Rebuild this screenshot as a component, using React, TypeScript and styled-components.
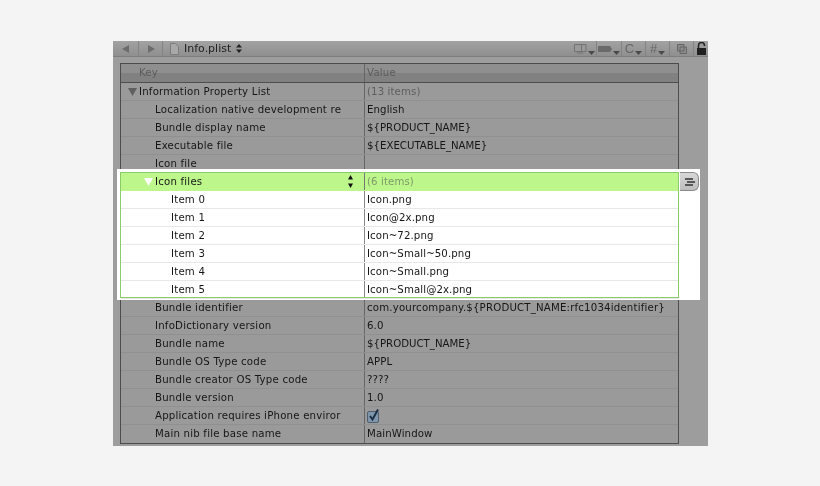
import React from "react";
import styled, { createGlobalStyle } from "styled-components";

const Global = createGlobalStyle`
  html, body { margin: 0; padding: 0; background: #f4f4f4; }
  #root { width: 820px; height: 486px; overflow: hidden; }
`;

const Page = styled.div`
  width: 820px;
  height: 486px;
  padding: 41px 112px 40px 113px;
  box-sizing: border-box;
  font-family: "DejaVu Sans", "Liberation Sans", sans-serif;
  font-size: 10.2px;
  color: #161616;
  filter: blur(0.3px);
`;

const Window = styled.div`
  height: 405px;
  background: #9d9d9d;
  display: flex;
  flex-direction: column;
`;

const Toolbar = styled.div`
  height: 15px;
  flex: none;
  display: flex;
  align-items: stretch;
  background: linear-gradient(#a2a2a2, #8f8f8f);
  border-bottom: 1px solid #7e7e7e;
`;

const ToolButton = styled.div<{ $w: number; $last?: boolean }>`
  width: ${(p) => p.$w}px;
  flex: none;
  display: flex;
  align-items: center;
  justify-content: center;
  border-right: ${(p) => (p.$last ? "none" : "1px solid #838383")};
  box-sizing: border-box;
  color: #626262;
`;

const FileCrumb = styled.div`
  flex: 1;
  display: flex;
  align-items: center;
  padding-left: 7px;
  color: #222;
  font-size: 11px;
`;

const FileName = styled.span`
  margin: 0 5px;
`;

const Glyph = styled.span`
  font-size: 13px;
  line-height: 1;
  color: #666;
  font-family: "Liberation Sans", sans-serif;
`;

const Table = styled.div`
  margin: 6px 29px 3px 7px;
  flex: 1;
  border: 1px solid #4c4c4c;
  display: flex;
  flex-direction: column;
`;

const Header = styled.div`
  height: 18px;
  flex: none;
  display: grid;
  grid-template-columns: 244px 1fr;
  background: linear-gradient(#8f8f8f 0 9px, #818181 9px);
  border-bottom: 1px solid #4e4e4e;
  color: #5c5c5c;
  line-height: 18px;
  letter-spacing: 0.2px;
`;

const HeaderCell = styled.div<{ $first?: boolean }>`
  padding-left: ${(p) => (p.$first ? 18 : 2)}px;
  ${(p) => (p.$first ? "border-right: 1px solid #666;" : "")}
`;

const Row = styled.div<{ $tone?: "plain" | "white" | "green"; $last?: boolean }>`
  height: 18px;
  flex: none;
  box-sizing: border-box;
  display: grid;
  grid-template-columns: 244px 1fr;
  line-height: 17px;
  background: ${(p) =>
    p.$tone === "white" ? "#ffffff" : p.$tone === "green" ? "#bdf78c" : "#9a9a9a"};
  border-bottom: ${(p) =>
    p.$last
      ? "none"
      : `1px solid ${p.$tone === "white" ? "#e8e8e8" : p.$tone === "green" ? "#bdf78c" : "#909090"}`};
`;

const KeyCell = styled.div<{ $indent: number; $line?: string }>`
  position: relative;
  padding-left: ${(p) => p.$indent}px;
  white-space: nowrap;
  overflow: hidden;
  letter-spacing: 0.2px;
  border-right: 1px solid ${(p) => p.$line ?? "#666"};
`;

const ValueCell = styled.div<{ $muted?: boolean; $track?: number }>`
  padding-left: 2px;
  white-space: nowrap;
  display: flex;
  align-items: center;
  height: 17px;
  letter-spacing: ${(p) => p.$track ?? 0.1}px;
  color: ${(p) => (p.$muted ? "#5e5e5e" : "inherit")};
`;

const GroupValue = styled(ValueCell)`
  color: #7d9a68;
`;

const Disclosure = styled.svg<{ $left: number }>`
  position: absolute;
  top: 5px;
  left: ${(p) => p.$left}px;
`;

const Stepper = styled.svg`
  position: absolute;
  right: 11px;
  top: 2px;
`;

const Highlight = styled.div`
  position: relative;
  z-index: 1;
  box-sizing: border-box;
  margin: -1px -1px 1px;
  padding: 1px;
  height: 126px;
  &::before {
    content: "";
    position: absolute;
    left: -3px;
    right: -21px;
    top: -3px;
    bottom: -2px;
    background: #fff;
    z-index: -1;
  }
  &::after {
    content: "";
    position: absolute;
    inset: 0;
    border: 1px solid #8ccb6a;
    pointer-events: none;
  }
`;

const AddButton = styled.div`
  position: absolute;
  right: -20px;
  top: 0;
  width: 19px;
  height: 19px;
  box-sizing: border-box;
  border: 1px solid #8a8a8a;
  border-left: none;
  border-radius: 0 6px 6px 0;
  background: linear-gradient(#d8d8d8, #bdbdbd);
  display: flex;
  align-items: center;
  justify-content: center;
`;

const CheckBox = styled.svg`
  flex: none;
`;

const Before: [string, string, number?][] = [
  ["Localization native development re", "English"],
  ["Bundle display name", "${PRODUCT_NAME}", 0],
  ["Executable file", "${EXECUTABLE_NAME}", 0],
  ["Icon file", ""],
];

const Items = ["Icon.png", "Icon@2x.png", "Icon~72.png", "Icon~Small~50.png", "Icon~Small.png", "Icon~Small@2x.png"];

const After: [string, string, number?][] = [
  ["Bundle identifier", "com.yourcompany.${PRODUCT_NAME:rfc1034identifier}", 0.18],
  ["InfoDictionary version", "6.0"],
  ["Bundle name", "${PRODUCT_NAME}", 0],
  ["Bundle OS Type code", "APPL"],
  ["Bundle creator OS Type code", "????"],
  ["Bundle version", "1.0"],
];

const Caret = () => (
  <svg width="7" height="4" viewBox="0 0 7 4" style={{ marginLeft: 1, marginTop: 9 }}>
    <path d="M0 0h7L3.500 4z" fill="#4a4a4a" />
  </svg>
);

export default function App() {
  return (
    <Page>
      <Global />
      <Window>
        <Toolbar>
          <ToolButton $w={26}>
            <svg width="8" height="8" viewBox="0 0 8 8"><path d="M7 0v8L0 4z" fill="#6c6c6c" /></svg>
          </ToolButton>
          <ToolButton $w={24}>
            <svg width="8" height="8" viewBox="0 0 8 8"><path d="M1 0v8l7-4z" fill="#6c6c6c" /></svg>
          </ToolButton>
          <FileCrumb>
            <svg width="9" height="12" viewBox="0 0 9 12">
              <path d="M.5.500h5L8.500 3.500v8H.5z" fill="#a8a8a8" stroke="#7c7c7c" />
            </svg>
            <FileName>Info.plist</FileName>
            <svg width="6" height="9" viewBox="0 0 6 9"><path d="M3 0l3 3.500H0zM3 9l3-3.500H0z" fill="#222" /></svg>
          </FileCrumb>
          <ToolButton $w={25}>
            <svg width="13" height="10" viewBox="0 0 13 10"><path d="M.5.500h7v7h-7zM7.500.500h4.500v7H7.500zM3 9h6" fill="#9a9a9a" stroke="#727272" /></svg>
            <Caret />
          </ToolButton>
          <ToolButton $w={25}>
            <svg width="14" height="6" viewBox="0 0 14 6"><path d="M0 0h12l2 3-2 3H0z" fill="#6a6a6a" /></svg>
            <Caret />
          </ToolButton>
          <ToolButton $w={24}>
            <Glyph>C</Glyph>
            <Caret />
          </ToolButton>
          <ToolButton $w={24}>
            <Glyph>#</Glyph>
            <Caret />
          </ToolButton>
          <ToolButton $w={24}>
            <svg width="10" height="10" viewBox="0 0 10 10"><path d="M.5.500h6.500v6.500H.5zM3 3h6.500v6.500H3z" fill="#8c8c8c" stroke="#666" /></svg>
          </ToolButton>
          <ToolButton $w={14} $last>
            <svg width="9" height="13" viewBox="0 0 9 13"><path d="M1.500 6V3.500a3 3 0 0 1 6 0V4" fill="none" stroke="#222" strokeWidth="1.500" /><path d="M0 6h9v7H0z" fill="#1f1f1f" /></svg>
          </ToolButton>
        </Toolbar>
        <Table>
          <Header>
            <HeaderCell $first>Key</HeaderCell>
            <HeaderCell>Value</HeaderCell>
          </Header>
          <Row>
            <KeyCell $indent={18}>
              <Disclosure $left={7} width="9" height="8" viewBox="0 0 9 8">
                <path d="M0 0h9L4.500 8z" fill="#5f5f5f" />
              </Disclosure>
              Information Property List
            </KeyCell>
            <ValueCell $muted>(13 items)</ValueCell>
          </Row>
          {Before.map(([k, v, t]) => (
            <Row key={k}>
              <KeyCell $indent={34}>{k}</KeyCell>
              <ValueCell $track={t}>{v}</ValueCell>
            </Row>
          ))}
          <Highlight>
            <Row $tone="green">
              <KeyCell $indent={34} $line="#777">
                <Disclosure $left={23} width="9" height="8" viewBox="0 0 9 8">
                  <path d="M0 0h9L4.500 8z" fill="#fff" />
                </Disclosure>
                Icon files
                <Stepper width="5" height="13" viewBox="0 0 5 13">
                  <path d="M2.500 0L5 4.500H0zM2.500 13L0 8.500h5z" fill="#111" />
                </Stepper>
              </KeyCell>
              <GroupValue>(6 items)</GroupValue>
            </Row>
            {Items.map((v, i) => (
              <Row $tone="white" key={v}>
                <KeyCell $indent={50} $line="#888">Item {i}</KeyCell>
                <ValueCell>{v}</ValueCell>
              </Row>
            ))}
            <AddButton>
              <svg width="11" height="8" viewBox="0 0 11 8">
                <path d="M1 1h8M3 4h8M1 7h8" stroke="#333" strokeWidth="1.400" />
              </svg>
            </AddButton>
          </Highlight>
          {After.map(([k, v, t]) => (
            <Row key={k}>
              <KeyCell $indent={34}>{k}</KeyCell>
              <ValueCell $track={t}>{v}</ValueCell>
            </Row>
          ))}
          <Row>
            <KeyCell $indent={34}>Application requires iPhone enviror</KeyCell>
            <ValueCell>
              <CheckBox width="13" height="14" viewBox="0 0 13 14">
                <rect x=".5" y="2.500" width="11" height="11" rx="1.500" fill="#7f96ad" stroke="#4f5f70" />
                <path d="M3 7l2.500 3.500L11 .5" fill="none" stroke="#1d2f44" strokeWidth="2" />
              </CheckBox>
            </ValueCell>
          </Row>
          <Row $last>
            <KeyCell $indent={34}>Main nib file base name</KeyCell>
            <ValueCell>MainWindow</ValueCell>
          </Row>
        </Table>
      </Window>
    </Page>
  );
}
